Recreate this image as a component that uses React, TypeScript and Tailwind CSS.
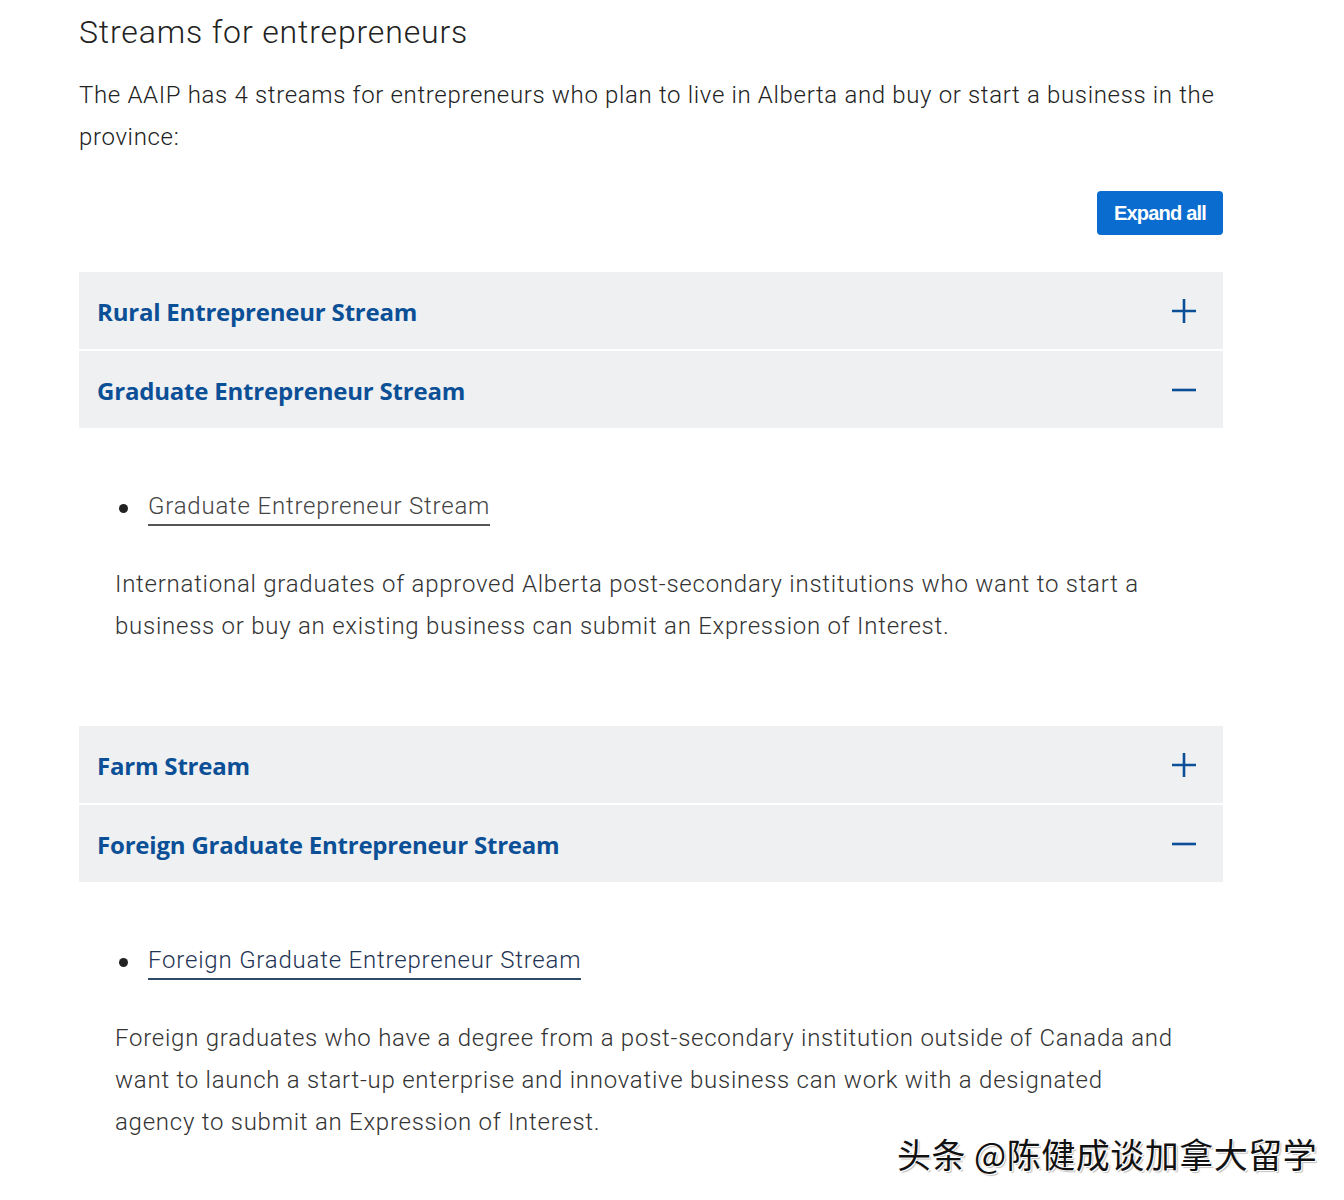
import React from "react";

type Item = { title: string; open: boolean; link?: string; linkTone?: "gray" | "navy"; body?: string[] };

const groupA: Item[] = [
  { title: "Rural Entrepreneur Stream", open: false },
  {
    title: "Graduate Entrepreneur Stream",
    open: true,
    link: "Graduate Entrepreneur Stream",
    linkTone: "gray",
    body: [
      "International graduates of approved Alberta post-secondary institutions who want to start a business or buy an existing business can submit an Expression of Interest.",
    ],
  },
];

const groupB: Item[] = [
  { title: "Farm Stream", open: false },
  {
    title: "Foreign Graduate Entrepreneur Stream",
    open: true,
    link: "Foreign Graduate Entrepreneur Stream",
    linkTone: "navy",
    body: [
      "Foreign graduates who have a degree from a post-secondary institution outside of Canada and want to launch a start-up enterprise and innovative business can work with a designated agency to submit an Expression of Interest.",
    ],
  },
];

function PlusIcon() {
  return (
    <svg width="26" height="26" viewBox="0 0 26 26" fill="none">
      <path d="M13 1v24M1 13h24" stroke="#0b4f96" strokeWidth="2.6" />
    </svg>
  );
}

function MinusIcon() {
  return (
    <svg width="26" height="26" viewBox="0 0 26 26" fill="none">
      <path d="M1 13h24" stroke="#0b4f96" strokeWidth="2.6" />
    </svg>
  );
}

function Header({ item }: { item: Item }) {
  return (
    <div className="flex h-[77px] items-center justify-between bg-[#eef0f2] pl-[18px] pr-[26px]">
      <span
        className="pt-[3px] text-[24px] font-bold tracking-[-0.2px] text-[#0b4f96]"
        style={{ fontFamily: "'Open Sans', Lato, sans-serif" }}
      >
        {item.title}
      </span>
      {item.open ? <MinusIcon /> : <PlusIcon />}
    </div>
  );
}

function Panel({ item }: { item: Item }) {
  const linkCls =
    item.linkTone === "navy"
      ? "text-[#1f3454] border-b-2 border-[#2f4a66]"
      : "text-[#444] border-b-2 border-[#555]";
  return (
    <div className="pl-[36px] pr-[36px] pt-[63px] pb-[79px]">
      <div className="flex items-center">
        <span className="mr-[20px] ml-[4px] inline-block h-[9px] w-[9px] rounded-full bg-[#222]" />
        <span className={`pb-[3px] text-[24px] leading-[30px] tracking-[0.8px] ${linkCls}`}>{item.link}</span>
      </div>
      {item.body?.map((p, i) => (
        <p key={i} className="mt-[37px] text-[24px] leading-[42px] tracking-[0.75px] text-[#333]">
          {p}
        </p>
      ))}
    </div>
  );
}

function Group({ items }: { items: Item[] }) {
  return (
    <div>
      {items.map((it, i) => (
        <div key={i}>
          <div className={i > 0 ? "mt-[2px]" : ""}>
            <Header item={it} />
          </div>
          {it.open && it.body ? <Panel item={it} /> : null}
        </div>
      ))}
    </div>
  );
}

export default function App() {
  return (
    <div
      className="relative min-h-[1200px] w-[1344px] bg-white text-[#222]"
      style={{ fontFamily: "Roboto, 'Liberation Sans', sans-serif", fontWeight: 300 }}
    >
      <div className="ml-[79px] w-[1144px] pt-[12px]">
        <h2 className="text-[32px] leading-[40px] tracking-[0.85px] text-[#222]" style={{ fontWeight: 300 }}>
          Streams for entrepreneurs
        </h2>
        <p className="mt-[22px] text-[24px] leading-[42px] tracking-[0.66px] text-[#222]">
          The AAIP has 4 streams for entrepreneurs who plan to live in Alberta and buy or start a business in the
          province:
        </p>
        <div className="mt-[33px] flex justify-end">
          <button
            className="h-[44px] w-[126px] rounded-[4px] bg-[#0a6ccf] text-[20px] font-bold tracking-[-0.8px] text-white"
            style={{ fontFamily: "'Liberation Sans', Arial, sans-serif" }}
          >
            Expand all
          </button>
        </div>
        <div className="mt-[37px]">
          <Group items={groupA} />
          <Group items={groupB} />
        </div>
      </div>
      <div
        className="absolute left-[897px] top-[1136px] text-[34px] leading-[36px] tracking-[0.5px] text-[#111]"
        style={{
          fontFamily: "'Noto Sans CJK SC', sans-serif",
          fontWeight: 400,
          textShadow: "1px 1px 0 #fff, -1px -1px 0 #fff, 2px 2px 1px rgba(0,0,0,0.25)",
        }}
      >
        头条 @陈健成谈加拿大留学
      </div>
    </div>
  );
}
